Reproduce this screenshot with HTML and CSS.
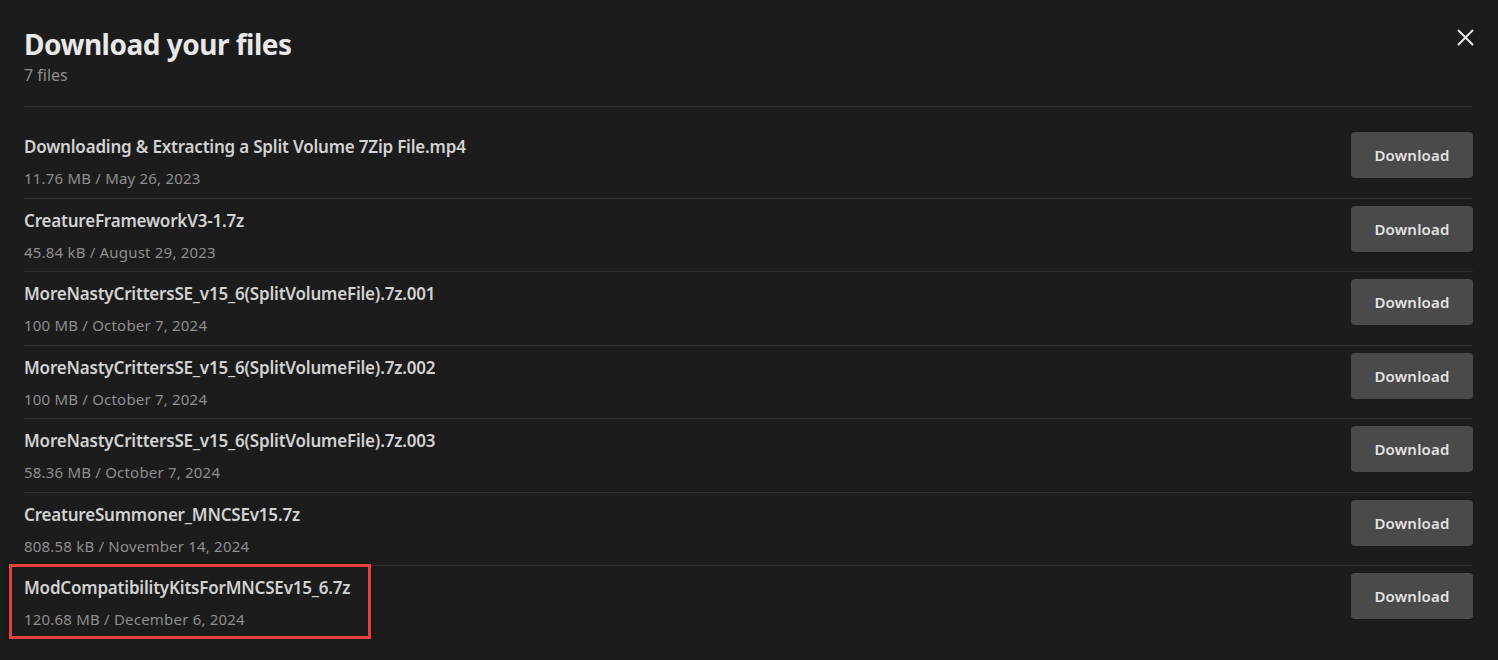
FILE: index.html
```html
<!DOCTYPE html>
<html lang="en">
<head>
    <meta charset="UTF-8">
    <meta name="viewport" content="width=device-width, initial-scale=1.0">
    <title>Download your files</title>
    <link rel="stylesheet" href="styles.css">
</head>
<body>
    <div class="dialog">
        <div class="dialog-head">
            <div>
                <h1>Download your files</h1>
                <p class="file-count">7 files</p>
            </div>
            <button class="close-btn" aria-label="Close">
                <svg width="17" height="17" viewBox="0 0 17 17"><path d="M1 1L16 16M16 1L1 16" stroke="#e8e8e8" stroke-width="2" fill="none"/></svg>
            </button>
        </div>
        <ul class="file-list">
            <li class="file-row">
                <div class="file-info">
                    <div class="file-name">Downloading &amp; Extracting a Split Volume 7Zip File.mp4</div>
                    <div class="file-meta">11.76 MB / May 26, 2023</div>
                </div>
                <button class="download-btn">Download</button>
            </li>
            <li class="file-row">
                <div class="file-info">
                    <div class="file-name">CreatureFrameworkV3-1.7z</div>
                    <div class="file-meta">45.84 kB / August 29, 2023</div>
                </div>
                <button class="download-btn">Download</button>
            </li>
            <li class="file-row">
                <div class="file-info">
                    <div class="file-name">MoreNastyCrittersSE_v15_6(SplitVolumeFile).7z.001</div>
                    <div class="file-meta">100 MB / October 7, 2024</div>
                </div>
                <button class="download-btn">Download</button>
            </li>
            <li class="file-row">
                <div class="file-info">
                    <div class="file-name">MoreNastyCrittersSE_v15_6(SplitVolumeFile).7z.002</div>
                    <div class="file-meta">100 MB / October 7, 2024</div>
                </div>
                <button class="download-btn">Download</button>
            </li>
            <li class="file-row">
                <div class="file-info">
                    <div class="file-name">MoreNastyCrittersSE_v15_6(SplitVolumeFile).7z.003</div>
                    <div class="file-meta">58.36 MB / October 7, 2024</div>
                </div>
                <button class="download-btn">Download</button>
            </li>
            <li class="file-row">
                <div class="file-info">
                    <div class="file-name">CreatureSummoner_MNCSEv15.7z</div>
                    <div class="file-meta">808.58 kB / November 14, 2024</div>
                </div>
                <button class="download-btn">Download</button>
            </li>
            <li class="file-row">
                <span class="highlight"></span>
                <div class="file-info">
                    <div class="file-name">ModCompatibilityKitsForMNCSEv15_6.7z</div>
                    <div class="file-meta">120.68 MB / December 6, 2024</div>
                </div>
                <button class="download-btn">Download</button>
            </li>
        </ul>
    </div>
</body>
</html>
```

FILE: styles.css
```css
:root {
    --bg-color: #1c1c1c;
    --line-color: #2d2d2d;
    --button-color: #4a4a4a;
    --title-color: #e8e8e8;
    --name-color: #d2d2d2;
    --meta-color: #8e8e8e;
}
body {
    margin: 0;
    background-color: var(--bg-color);
    font-family: 'Noto Sans', 'Open Sans', sans-serif;
    color: var(--name-color);
}
.dialog {
    padding: 0 25px 0 24px;
}
.dialog-head {
    display: flex;
    justify-content: space-between;
    align-items: flex-start;
    padding-top: 26px;
    padding-bottom: 20px;
    border-bottom: 1px solid var(--line-color);
}
h1 {
    margin: 0;
    font-size: 28px;
    line-height: 36px;
    font-weight: 700;
    letter-spacing: -0.5px;
    color: var(--title-color);
}
.file-count {
    margin: 2px 0 0;
    font-size: 16px;
    line-height: 22px;
    color: var(--meta-color);
}
.close-btn {
    margin-top: 3px;
    margin-right: -1px;
    padding: 0;
    border: none;
    background: none;
    width: 17px;
    height: 17px;
    cursor: pointer;
}
.close-btn svg {
    display: block;
}
.file-list {
    list-style: none;
    margin: 0;
    padding: 18px 0 0;
}
.file-row {
    position: relative;
    display: flex;
    justify-content: space-between;
    align-items: flex-start;
    padding: 7px 0 9.5px;
    border-bottom: 1px solid var(--line-color);
}
.file-row:last-child {
    border-bottom: none;
}
.file-info {
    padding-top: 3px;
}
.file-name {
    font-size: 17px;
    line-height: 24px;
    font-weight: 600;
    letter-spacing: -0.2px;
    color: var(--name-color);
}
.file-meta {
    margin-top: 9px;
    font-size: 15px;
    line-height: 20px;
    letter-spacing: 0.2px;
    color: var(--meta-color);
}
.download-btn {
    width: 122px;
    height: 46px;
    border: none;
    border-radius: 4px;
    background-color: var(--button-color);
    color: #e2e2e2;
    font-family: inherit;
    font-size: 15px;
    font-weight: 600;
    letter-spacing: 0.2px;
    cursor: pointer;
}
.highlight {
    position: absolute;
    left: -15px;
    top: -2px;
    width: 362px;
    height: 75px;
    box-sizing: border-box;
    border: 3px solid #e8403f;
    box-shadow: 0 1px 4px rgba(0, 0, 0, 0.5);
    pointer-events: none;
}
```
